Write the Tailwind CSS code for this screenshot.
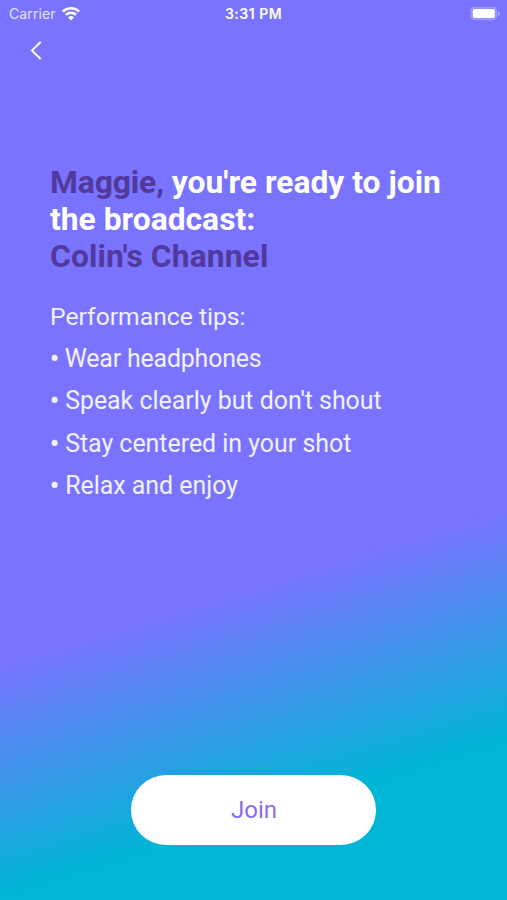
<!DOCTYPE html>
<html lang="en">
<head>
    <meta charset="UTF-8">
    <meta name="viewport" content="width=device-width, initial-scale=1.0">
    <title>Join Broadcast</title>
    <script src="https://cdn.jsdelivr.net/npm/@tailwindcss/browser@4"></script>
</head>
<body class="h-screen overflow-hidden flex flex-col text-white font-['Roboto',sans-serif] bg-[linear-gradient(163deg,#7a73ff_62.7%,#00b5d6_84.8%)]">
    <!-- Status bar -->
    <header class="grid grid-cols-3 items-center h-[27px] pl-[9px] pr-[6px] font-['Inter',sans-serif] text-[14px]">
        <div class="flex items-center gap-1.5 text-white/80">
            <span class="tracking-[0.1px]">Carrier</span>
            <svg class="w-[18px] h-[14px]" viewBox="0 0 18 14" fill="none" stroke="#fff" stroke-width="2.6">
                <path d="M.9 4.6a11.6 11.6 0 0 1 16.2 0"/>
                <path d="M3.9 7.9a7.3 7.3 0 0 1 10.2 0"/>
                <path d="M9 13.4 6.1 10.5a4.1 4.1 0 0 1 5.8 0z" fill="#fff" stroke="none"/>
            </svg>
        </div>
        <span class="text-center font-semibold text-[14px] tracking-[0.5px] pr-[3px]">3:31 PM</span>
        <svg class="justify-self-end w-[31px] h-[14px]" viewBox="0 0 31 14">
            <rect x=".8" y=".1" width="26" height="12.8" rx="3.8" fill="#fff" fill-opacity=".2" stroke="#fff" stroke-opacity=".2"/>
            <rect x="2.8" y="2" width="22" height="9" rx="1.5" fill="#fff"/>
            <path d="M28 4.2c2.4.8 2.4 3.8 0 4.6z" fill="#fff" fill-opacity=".4"/>
        </svg>
    </header>

    <nav class="pl-[30px] pt-[14px]">
        <button class="block" aria-label="Back">
            <svg class="w-3 h-[19px]" viewBox="0 0 12 19" fill="none" stroke="#fff" stroke-width="1.9">
                <path d="M10.7 1 1.9 9.5l8.8 8.5"/>
            </svg>
        </button>
    </nav>

    <main class="flex-1 pl-[50px] pt-[104px]">
        <h1 class="text-[31.8px] leading-[37px] font-bold whitespace-nowrap">
            <span class="text-[#51399e] tracking-[-0.1px]">Maggie,</span> you're ready to join<br>
            the broadcast:<br>
            <span class="text-[#51399e] tracking-[0.1px]">Colin's Channel</span>
        </h1>
        <h2 class="mt-[21px] mb-px text-[24.7px] leading-[41px] text-white/90">Performance tips:</h2>
        <ul class="text-[24.9px] leading-[42.3px] text-white/90">
            <li class="tracking-[-0.17px]"><b>•</b> Wear headphones</li>
            <li><b>•</b> Speak clearly but don't shout</li>
            <li><b>•</b> Stay centered in your shot</li>
            <li><b>•</b> Relax and enjoy</li>
        </ul>
    </main>

    <footer class="flex justify-center pb-[55px]">
        <button class="w-[245px] h-[70px] pl-px rounded-full bg-white text-[#8b6cf0] text-2xl">Join</button>
    </footer>
</body>
</html>
